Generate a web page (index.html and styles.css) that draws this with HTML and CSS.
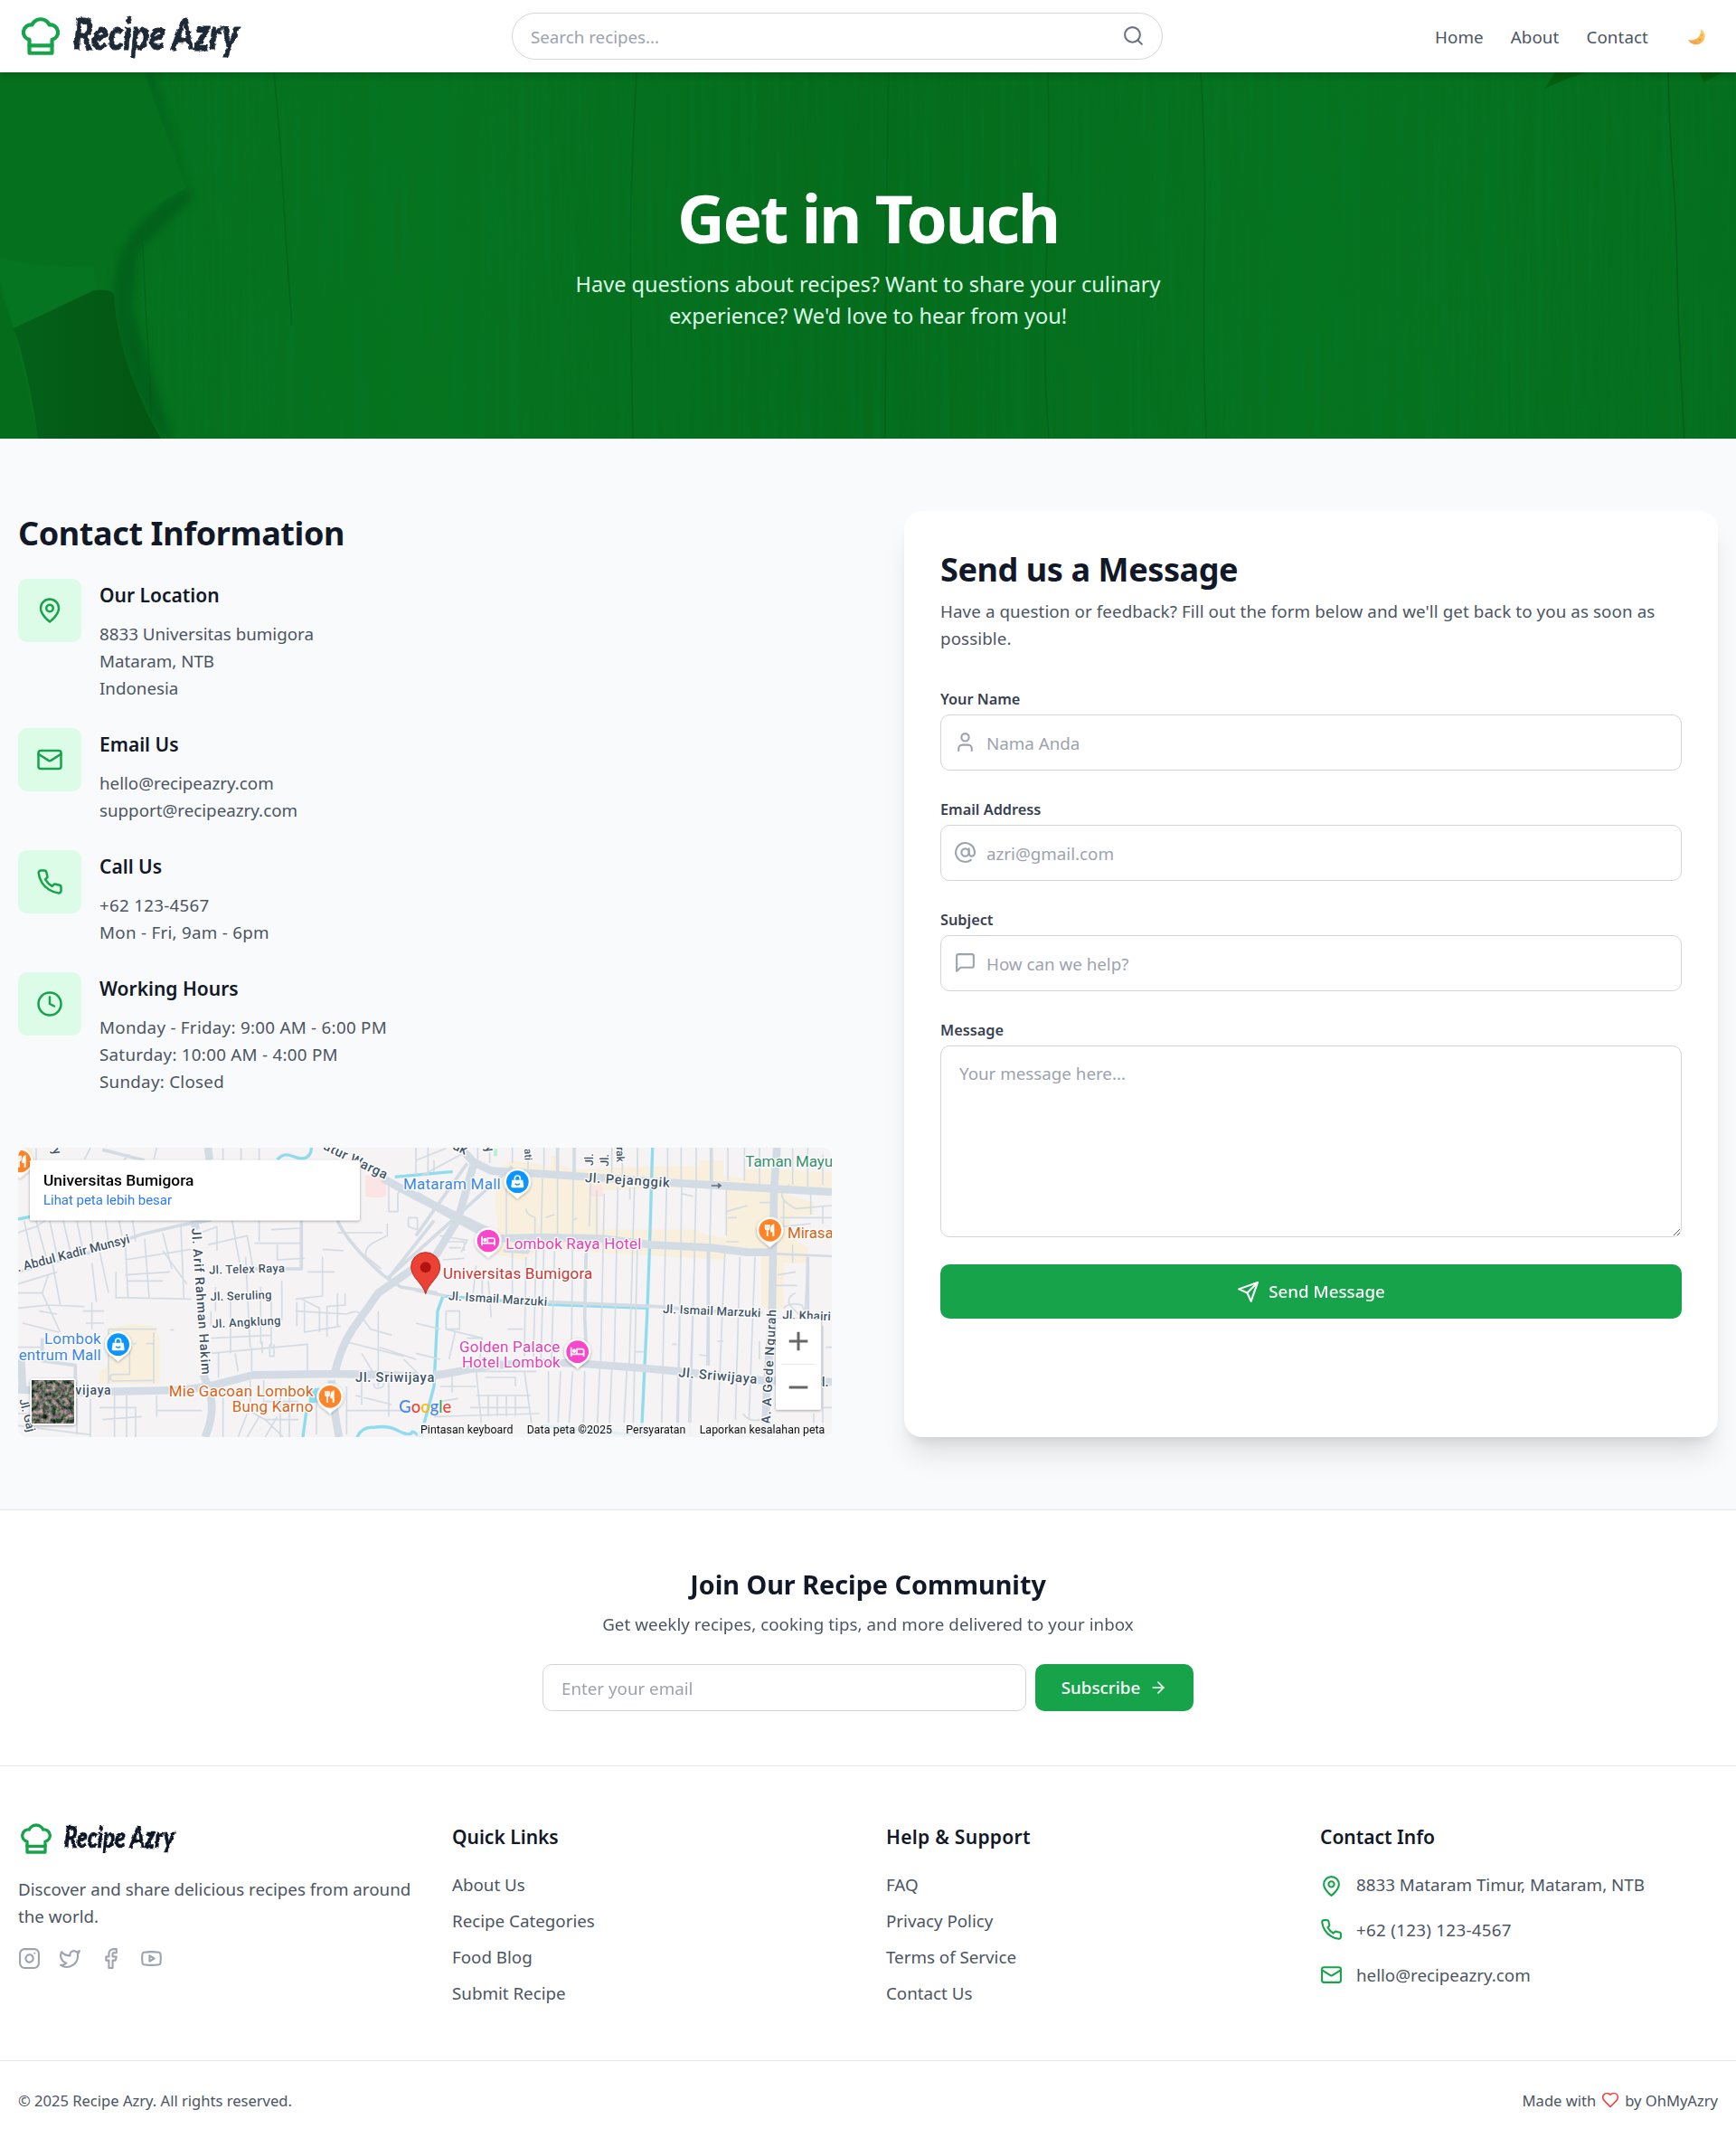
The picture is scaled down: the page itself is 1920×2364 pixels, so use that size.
FILE: index.html
```html
<!DOCTYPE html>
<html lang="en">
<head>
<meta charset="utf-8">
<title>Contact - Recipe Azry</title>
<link rel="stylesheet" href="styles.css">
</head>
<body>
<svg class="defs" aria-hidden="true">
  <filter id="brush" x="-5%" y="-20%" width="110%" height="150%"><feTurbulence type="fractalNoise" baseFrequency=".12 .18" numOctaves="2" seed="3"/><feDisplacementMap in="SourceGraphic" scale="5" xChannelSelector="R" yChannelSelector="G"/></filter>
  <symbol id="i-hat" viewBox="0 0 24 24"><path d="M6 13.87A4 4 0 0 1 7.41 6a5.11 5.11 0 0 1 1.05-1.54 5 5 0 0 1 7.08 0A5.11 5.11 0 0 1 16.59 6 4 4 0 0 1 18 13.87V21H6Z"/><path d="M6 17h12"/></symbol>
  <symbol id="i-search" viewBox="0 0 24 24"><circle cx="11" cy="11" r="8"/><path d="m21 21-4.3-4.3"/></symbol>
  <symbol id="i-pin" viewBox="0 0 24 24"><path d="M20 10c0 6-8 12-8 12s-8-6-8-12a8 8 0 0 1 16 0Z"/><circle cx="12" cy="10" r="3"/></symbol>
  <symbol id="i-mail" viewBox="0 0 24 24"><rect x="2" y="4" width="20" height="16" rx="2"/><path d="m22 7-8.97 5.7a1.94 1.94 0 0 1-2.06 0L2 7"/></symbol>
  <symbol id="i-phone" viewBox="0 0 24 24"><path d="M22 16.92v3a2 2 0 0 1-2.18 2 19.79 19.79 0 0 1-8.63-3.07 19.5 19.5 0 0 1-6-6 19.79 19.79 0 0 1-3.07-8.67A2 2 0 0 1 4.11 2h3a2 2 0 0 1 2 1.72 12.84 12.84 0 0 0 .7 2.81 2 2 0 0 1-.45 2.11L8.09 9.91a16 16 0 0 0 6 6l1.27-1.27a2 2 0 0 1 2.11-.45 12.84 12.84 0 0 0 2.81.7A2 2 0 0 1 22 16.92z"/></symbol>
  <symbol id="i-clock" viewBox="0 0 24 24"><circle cx="12" cy="12" r="10"/><path d="M12 6v6l4 2"/></symbol>
  <symbol id="i-user" viewBox="0 0 24 24"><path d="M19 21v-2a4 4 0 0 0-4-4H9a4 4 0 0 0-4 4v2"/><circle cx="12" cy="7" r="4"/></symbol>
  <symbol id="i-at" viewBox="0 0 24 24"><circle cx="12" cy="12" r="4"/><path d="M16 8v5a3 3 0 0 0 6 0v-1a10 10 0 1 0-4 8"/></symbol>
  <symbol id="i-msg" viewBox="0 0 24 24"><path d="M21 15a2 2 0 0 1-2 2H7l-4 4V5a2 2 0 0 1 2-2h14a2 2 0 0 1 2 2z"/></symbol>
  <symbol id="i-send" viewBox="0 0 24 24"><path d="m22 2-7 20-4-9-9-4Z"/><path d="M22 2 11 13"/></symbol>
  <symbol id="i-arrow" viewBox="0 0 24 24"><path d="M5 12h14"/><path d="m12 5 7 7-7 7"/></symbol>
  <symbol id="i-instagram" viewBox="0 0 24 24"><rect x="2" y="2" width="20" height="20" rx="5"/><path d="M16 11.37A4 4 0 1 1 12.63 8 4 4 0 0 1 16 11.37z"/><path d="M17.5 6.5h.01"/></symbol>
  <symbol id="i-twitter" viewBox="0 0 24 24"><path d="M22 4s-.7 2.1-2 3.4c1.6 10-9.4 17.3-18 11.6 2.2.1 4.4-.6 6-2C3 15.5.5 9.6 3 5c2.2 2.6 5.6 4.1 9 4-.9-4.2 4-6.6 7-3.8 1.1 0 3-1.2 3-1.2z"/></symbol>
  <symbol id="i-facebook" viewBox="0 0 24 24"><path d="M18 2h-3a5 5 0 0 0-5 5v3H7v4h3v8h4v-8h3l1-4h-4V7a1 1 0 0 1 1-1h3z"/></symbol>
  <symbol id="i-youtube" viewBox="0 0 24 24"><path d="M2.5 17a24.12 24.12 0 0 1 0-10 2 2 0 0 1 1.4-1.4 49.56 49.56 0 0 1 16.2 0A2 2 0 0 1 21.5 7a24.12 24.12 0 0 1 0 10 2 2 0 0 1-1.4 1.4 49.55 49.55 0 0 1-16.2 0A2 2 0 0 1 2.5 17"/><path d="m10 15 5-3-5-3z"/></symbol>
  <symbol id="i-heart" viewBox="0 0 24 24"><path d="M19 14c1.49-1.46 3-3.21 3-5.5A5.5 5.5 0 0 0 16.5 3c-1.76 0-3 .5-4.5 2-1.5-1.5-2.74-2-4.5-2A5.5 5.5 0 0 0 2 8.5c0 2.3 1.5 4.05 3 5.5l7 7Z"/></symbol>
</svg>

<header class="topbar">
  <a class="brand"><svg class="icon brand-hat"><use href="#i-hat"/></svg><svg class="brand-name" viewBox="0 0 185 60"><g filter="url(#brush)"><text x="1" y="45" textLength="102" lengthAdjust="spacingAndGlyphs">Recipe</text><text x="110" y="45" textLength="74" lengthAdjust="spacingAndGlyphs">Azry</text></g></svg></a>
  <div class="search"><input type="text" placeholder="Search recipes..."><svg class="icon"><use href="#i-search"/></svg></div>
  <nav class="nav">
    <a>Home</a><a>About</a><a>Contact</a>
    <button class="theme" aria-label="Theme"><svg viewBox="0 0 24 24"><defs><linearGradient id="moon" x1="1" y1="0" x2="0.2" y2="1"><stop offset="0" stop-color="#ffd56b"/><stop offset=".6" stop-color="#fbb84e"/><stop offset="1" stop-color="#f79a4c"/></linearGradient></defs><path fill="url(#moon)" d="M17 2.2C22 5.400 24 11.500 21 16.500 17.800 22 10.600 23.600 5.200 20.300 3.500 19.200 2.200 17.600 1.400 15.900c4.400 1.300 9.200.2 12.400-3.100C16.600 9.900 17.700 6 17 2.200Z"/><g fill="#e8964a"><circle cx="18.500" cy="10" r="1"/><circle cx="16" cy="16" r="1.300"/><circle cx="10" cy="19" r=".9"/></g></svg></button>
  </nav>
</header>

<section class="hero">
  <svg class="hero-bg" viewBox="0 0 1920 405" preserveAspectRatio="none">
    <defs>
      <filter id="grain" x="0" y="0" width="100%" height="100%"><feTurbulence type="fractalNoise" baseFrequency="0.16 0.004" numOctaves="4" seed="7"/><feColorMatrix values="0 0 0 0 0  0 0 0 0 .2  0 0 0 0 .03  1.6 0 0 0 -.62"/></filter>
      <filter id="soft"><feGaussianBlur stdDeviation="5"/></filter>
      <linearGradient id="tone"><stop offset="0" stop-color="#05701d"/><stop offset=".25" stop-color="#06731f"/><stop offset=".5" stop-color="#056c1c"/><stop offset=".75" stop-color="#06731f"/><stop offset="1" stop-color="#056f1e"/></linearGradient>
      <linearGradient id="handle" x1="0" x2="1"><stop offset="0" stop-color="#046119"/><stop offset="1" stop-color="#035512"/></linearGradient>
    </defs>
    <rect width="1920" height="405" fill="url(#tone)"/>
    <rect width="1920" height="405" filter="url(#grain)" opacity=".4"/>
    <g fill="none" stroke="#035014" stroke-width="1.500" opacity=".35"><path d="M158 190q2 60 6 120t2 95"/><path d="M303 0q6 60 10 130t10 150"/><path d="M704 0q-4 70-6 140t2 265M983 0q-3 120-4 405M1159 0q2 120-2 220t3 185"/><path d="M1328 0q6 90 4 200t2 205"/></g>
    <path d="M1845 0q1 60 5 110t5 110 8 190" fill="none" stroke="#035014" stroke-width="1.500" opacity=".6"/>
    <path d="M160 0 206 128q-50 30-66 60t-14 80q10 70 54 137H190L146 260l6-60 60-60L168 0Z" fill="#034f12" opacity=".5" filter="url(#soft)"/>
    <path d="M0 0H159Q185 70 206 128q-64 32-78 64-17 22-20 52l-5 40-60 121H0Z" fill="#05711e"/>
    <path d="M0 205q50 12 104 10l2 26-91 42L0 230Z" fill="#067521"/>
    <path d="M0 240 15 283 42 405H0Z" fill="#056c1c"/>
    <path d="M15 283 104 241Q122 239 126 245C128 290 144 345 178 405H42Q32 330 15 283Z" fill="url(#handle)"/>
    <path d="M1708 18q26-12 46-18h-34q-6 10-12 18ZM1880 0h26l-22 11Z" fill="#04600f"/>
  </svg>
  <div class="hero-text">
    <h1>Get in Touch</h1>
    <p>Have questions about recipes? Want to share your culinary<br>experience? We'd love to hear from you!</p>
  </div>
</section>

<main class="main">
  <section class="info">
    <h2>Contact Information</h2>
    <div class="items">
      <div class="item"><span class="tile"><svg class="icon"><use href="#i-pin"/></svg></span><div><h3>Our Location</h3><p>8833 Universitas bumigora<br>Mataram, NTB<br>Indonesia</p></div></div>
      <div class="item"><span class="tile"><svg class="icon"><use href="#i-mail"/></svg></span><div><h3>Email Us</h3><p>hello@recipeazry.com<br>support@recipeazry.com</p></div></div>
      <div class="item"><span class="tile"><svg class="icon"><use href="#i-phone"/></svg></span><div><h3>Call Us</h3><p class="figures">+62 123-4567<br>Mon - Fri, 9am - 6pm</p></div></div>
      <div class="item"><span class="tile"><svg class="icon"><use href="#i-clock"/></svg></span><div><h3>Working Hours</h3><p class="figures">Monday - Friday: 9:00 AM - 6:00 PM<br>Saturday: 10:00 AM - 4:00 PM<br>Sunday: Closed</p></div></div>
    </div>
    <svg class="map" viewBox="60 58 2700 960">
      <defs>
        <filter id="sh" x="-20%" y="-20%" width="140%" height="150%"><feDropShadow dx="0" dy="3" stdDeviation="4" flood-opacity=".35"/></filter>
        <filter id="sat" x="0" y="0" width="100%" height="100%" color-interpolation-filters="sRGB"><feTurbulence type="fractalNoise" baseFrequency=".07" numOctaves="5" seed="4"/><feColorMatrix values="1.3 0 0 0 -.24  .8 .3 0 0 -.13  .9 0 .2 0 -.17  0 0 0 0 1"/></filter>
        <g id="bag"><path d="M-18-4h36l3 22q0 4-4 4h-34q-4 0-4-4Z" fill="#fff"/><path d="M-9-4v-5a9 9 0 0 1 18 0v5" fill="none" stroke="#fff" stroke-width="5"/><path d="M-8 8q8 8 16 0" fill="none" stroke="#0b96ff" stroke-width="4"/></g>
        <g id="fork" fill="none" stroke="#fff"><path d="M-15-19v12q0 5 6 5t6-5v-12M-9-19V20" stroke-width="5"/><path d="M11 20V-17q-8 3-7 20h7" stroke-width="6" fill="#fff"/></g>
        <g id="bed" fill="none" stroke="#fff" stroke-width="5"><path d="M-21-15V16M21 16V-3q0-6-6-6H-2V6M-21 8H21"/><circle cx="-11" cy="-3" r="4" fill="#fff"/></g>
      </defs>
      <rect x="60" y="58" width="2700" height="960" fill="#f5f3f4"/>
      <g class="zone">
        <path d="M358 654 430 643 515 650 530 690V840H330V800L358 780ZM60 58h48v60H60Z"/>
        <path d="M1645 130 1700 100 1830 120V85h20V110L1900 130 2170 120 2320 120V100H2400V150L2470 160V130H2560L2760 140V200L2600 210 2700 240V280L2620 290V350L2680 390V440H2600V590H2525V400H2410V430L1800 395 1740 430 1650 415V280H1645ZM2320 190V340L2410 360V190ZM1990 200V330H2320V190Z" fill-rule="evenodd"/>
      </g>
      <path d="M1212 150h70v68q-20 10-70 2ZM1955 185h45v35h-45Z" fill="#fce4e4"/>
      <path d="M1638 62h12v24h-12Z" fill="#b8efcf"/>
      <g class="water">
        <path d="M60 295 110 285M920 98q20-25 50-12 45 20 60-10l4-18M1310 155l130-12q50-5 62-5"/>
        <path d="M1185 1018q15-35 55-32 45-8 80 10 45 24 50 0M1005 1018 1018 920M1372 1000 1395 1018 1440 850 1452 600 1470 550 1820 578 2150 590M2165 58 2155 400 2148 590 2128 1018M1800 980l200 20 100 10" />
        <path d="M1030 860h34v40h-34Z" fill="#8fdcee"/>
      </g>
      <g class="minor">
        <path d="M120 60v40M60 340l60-20 30-20M80 300l30 140M120 300l35 130M165 300l25 120M210 300l25 110M255 300l20 100M300 300l10 90M350 300l10 70M395 300l10 50M60 510l130-40M160 480l-20 60H60M140 540l60 130M60 590l100-10 120 5M170 420l30 160M305 440l15 130M330 400l30 140M385 470v90M415 360l10 200M480 360l15 200M440 300l10 70M540 340l30 120M600 310l10 250M415 430l220-35M415 480l150-10M385 555l250 5M420 500h120M540 400l80 110M640 350l80-30M720 320v80M690 380l130-30 20 110M770 300l25 140M860 300v70M845 375h160M920 380v50l90-5M1000 300v60M900 330l100-5M1070 420v130l-90 10M1020 470h90M1070 395 1140 400M815 420l15 300M700 600v50M715 520v80M765 560v180M865 520v190M900 560v160M935 500v130M700 690l200-10M985 570v80M1010 570v100l120-20M1120 540v110M1145 540v40l-60 5v100M1000 560l60 30v80M980 600l170 10M1150 610q40-20 50 10l30 40 70 20"/>
        <path d="M275 600h70M285 640h60M305 570v90M130 600l60 10M75 640l120 30M60 720h80M360 660v180M360 660h160M510 670v170M430 690v120H380q-15 0-15 10t12 12l130-2M440 708h12M485 708h25M565 662h12M725 740v80M780 740l10 60M835 720v80M700 740l320-30V800M870 700v40M895 710v40h14v-40M1140 700l200 50M1260 720l120 40M1200 740l60 100M1340 760l60 60"/>
        <path d="M60 940h190M60 980l240 30M255 890v120M300 890v128M330 920h120v98M380 870v148M420 880v138M520 880v70M340 960l130-10M520 930h150M740 830v188M770 900l110 60 60 58M830 830v90M875 830v80M820 940l-30 78M860 950l-40 68M920 950l-40 68M930 860v158M960 860v158M880 900h110M880 960h110M1050 900v110M1150 850v160M1200 830v80M1255 600v250M1290 830v120M1180 880l120 30M1150 930h200M1240 840q0 20 17 15 17 0 15-15"/>
        <path d="M300 58l-20 40M680 58l20 50M430 80l-20 20M520 58l-10 40M740 60v40M800 60v40M860 60v40M1290 180v90h30v-60l20-30M1355 290h30v40l-30-10ZM1215 420q-10-30 30-50l40-20V310M1120 340h150M1215 420l50 40M1380 58v90M1420 58v90"/>
        <g transform="translate(1380 0)">
          <path d="M0 100 100 60M20 150 170 70M60 100v40M205 58v40M245 60v50M320 58v50M372 58v70M425 58v80M600 200v160M650 58v90M685 58v100M735 58v110M835 58v110M880 58v110M930 58v110M1035 58v110M1090 58v110M1140 58v120M1250 60v120M1300 58v130M1350 80v100"/>
          <path d="M300 190v160M365 260q0 20 30 30v60M420 160l-5 200M470 160v190M522 160l-6 600M580 160l-5 160M625 210l-12 560M670 190l-12 580M725 190l-17 590M832 170l-20 970M882 170l-12 850M930 170l-20 850M980 180l-15 600M1030 190v160M400 350l-10 400M460 400l-10 360M425 380l-10 380M365 420l-5 330M320 400v150M1075 420l-15 540M1125 420l-20 540M1025 410l-25 600M925 410l-20 560M880 400l-15 610M735 380l-15 640M520 800l-15 218M560 800l-5 218M610 790l-10 228M650 790l-10 228M700 790l-12 228M440 800v200M480 800l-10 200"/>
          <path d="M80 350l90 15-20 40M100 370h60v30M110 390h40M90 430l70-5M200 450l-10 90M220 480v80M240 500l10 120M100 600h45v60H100ZM100 660l120 30-10 90M130 670l-20 90M0 640l80 20M0 740l80 20M60 800h340M80 850h120M80 900l60-10M120 810v60M200 800l20 200M230 820h100v30M200 880h180M180 920h200M60 950l350-10M240 880v70M270 880v70M300 880v70M330 880v70M360 800l30 218M305 660h50M170 690h50M850 710h15M725 735h30M940 745l35 5M430 290l30-10M520 300l15-10M710 190v40M1030 270l70-20M1035 290h30M1140 240h40M880 210l40 10M1030 370h40"/>
          <path d="M1220 230v90l90-10M1310 200v80M1350 250v60M1240 180q-60 40 20 80l120-10M1210 290h170M1300 420l-10 200M1250 380v60M1200 480l60-10M1190 515h75M1260 540q-30 10-20 40l40 40M1220 590q20-20 60-10l20 40M1085 940q20 30 60 20M1000 700h20M1140 700v60M1350 920h30M1360 720h20M1350 650v370M1320 940v78"/>
        </g>
      </g>
      <g class="mid"><path d="M1000 300v160H820M650 300v30M60 470 300 405 470 345 600 315 700 298M1120 300q30 70 150 180l60 40 120 20M1290 490 1440 300M250 870v-90l-110-15V690M340 65 480 100M70 760v60M1282 495 1700 120"/>
      <g transform="translate(1380 0)"><path d="M565 385 560 620 565 720M970 380v400M440 570 800 585 960 600 1150 605M980 58v120M1300 420v180M525 58v90M470 58v90M0 350 170 110M290 400l80 5 20-30M0 530l100 20"/></g></g>
      <g class="major"><path d="M60 860 250 870 600 862 690 850 840 812 1110 808 1200 810 1380 815M1110 808Q1130 720 1170 660L1255 540 1370 460 1440 425 1520 295 1572 110M650 330 645 300M1100 830Q1105 920 1125 1018M690 58l5 40M675 810 690 850Q720 930 680 1018M70 760 75 860M1270 160 1390 225 1650 350" />
        <g transform="translate(1380 0)"><path d="M60 815 250 780 440 770 560 775 760 790 870 800 1150 830 1380 835M150 60 190 105 250 135 420 145 650 160 860 175 1200 195 1380 205M0 215 130 290 260 360 420 355 620 360 780 380 980 390 1100 405 1195 405M1198 58 1188 200 1182 600 1165 840 1158 1018"/><path class="thin" d="M1195 410 1380 418"/></g></g>

      <g class="road-label">
        <text transform="translate(1070 62) rotate(26)" font-size="44" textLength="230">atur Warga</text>
        <text transform="translate(60 470) rotate(-14.500)" font-size="42" textLength="385">. Abdul Kadir Munsyi</text>
        <text transform="translate(636 326) rotate(86)" font-size="43" textLength="486">Jl. Arif Rahman Hakim</text>
        <text transform="translate(694 477) rotate(-1.500)" font-size="39" textLength="251">Jl. Telex Raya</text>
        <text transform="translate(698 566) rotate(-2)" font-size="39" textLength="204">Jl. Seruling</text>
        <text transform="translate(704 656) rotate(-3)" font-size="39" textLength="228">Jl. Angklung</text>
        <text x="250" y="878" font-size="42" textLength="118">vijaya</text>
        <text transform="translate(64 894) rotate(76)" font-size="40">Jl. Gaj</text>
        <text x="1179" y="836" font-size="44" textLength="262">Jl. Sriwijaya</text>
        <text transform="translate(172 66) rotate(65)" font-size="40">y</text>
        <g transform="translate(1380 0)">
          <text transform="translate(120 62) rotate(25)" font-size="44">ak</text>
          <text transform="translate(228 58) rotate(65)" font-size="40">y</text>
          <text transform="translate(360 62) rotate(88)" font-size="34">ati</text>
          <text transform="translate(588 118) rotate(-90)" font-size="38">Jl. </text>
          <text transform="translate(640 120) rotate(-90)" font-size="38">Jl. </text>
          <text transform="translate(665 56) rotate(88)" font-size="36">rak</text>
          <text transform="translate(560 172) rotate(3.500)" font-size="44" textLength="282">Jl. Pejanggik</text>
          <text transform="translate(107 563) rotate(3.500)" font-size="40" textLength="328">Jl. Ismail Marzuki</text>
          <text transform="translate(819 606) rotate(2.500)" font-size="40" textLength="325">Jl. Ismail Marzuki</text>
          <text transform="translate(1216 626) rotate(2)" font-size="40" textLength="160">Jl. Khairi</text>
          <text transform="translate(870 818) rotate(5)" font-size="44" textLength="262">Jl. Sriwijaya</text>
          <text transform="translate(1175 975) rotate(-87)" font-size="42" textLength="380">A. A Gede Ngurah</text>
          <text x="1346" y="850" font-size="44">l.</text>
          <path d="M980 184h30m-8-7 9 7-9 7" fill="none" stroke="#5c7080" stroke-width="5"/>
        </g>
      </g>
      <g class="place-label">
        <g fill="#3b86e8"><text x="147" y="710" textLength="188">Lombok</text><text x="62" y="763" textLength="273">entrum Mall</text><text x="1338" y="196" textLength="323">Mataram Mall</text></g>
        <g fill="#d56416"><text x="560" y="882" textLength="480">Mie Gacoan Lombok</text><text x="770" y="935" textLength="269">Bung Karno</text><text x="2613" y="357" textLength="152">Mirasa</text></g>
        <g fill="#e240b4"><text x="1678" y="393" textLength="450">Lombok Raya Hotel</text><text x="1524" y="735" textLength="334">Golden Palace</text><text x="1533" y="787" textLength="326">Hotel Lombok</text></g>
        <text x="2473" y="122" fill="#36906c" textLength="290">Taman Mayu</text>
        <text x="1470" y="492" fill="#c8352f" textLength="496">Universitas Bumigora</text>
      </g>
      <g filter="url(#sh)">
        <g fill="#fff"><path id="drop" d="M392 768C380 752 348 742 348 711A44 44 0 0 1 436 711C436 742 404 752 392 768Z"/><use href="#drop" x="1325" y="-540"/><use href="#drop" x="703" y="173"/><use href="#drop" x="2163" y="-379"/><use href="#drop" x="-326" y="-608"/><use href="#drop" x="1228" y="-344"/><use href="#drop" x="1524" y="24"/></g>
      </g>
      <g fill="#0b96ff"><circle cx="392" cy="711" r="37"/><circle cx="1717" cy="171" r="37"/></g>
      <g fill="#ff8427"><circle cx="1095" cy="884" r="37"/><circle cx="2555" cy="332" r="37"/><circle cx="66" cy="103" r="37"/></g>
      <g fill="#f847cb"><circle cx="1620" cy="367" r="37"/><circle cx="1916" cy="735" r="37"/></g>
      <use href="#bag" x="392" y="709"/><use href="#bag" x="1717" y="169"/>
      <use href="#fork" x="1095" y="884"/><use href="#fork" x="2555" y="332"/><use href="#fork" x="72" y="103"/>
      <use href="#bed" x="1620" y="367"/><use href="#bed" x="1916" y="735"/>
      <path d="M1412 543C1402 505 1364 490 1364 453A48 48 0 0 1 1460 453C1460 490 1422 505 1412 543Z" fill="#ea4335" stroke="#c5221f" stroke-width="3"/><circle cx="1412" cy="455" r="18" fill="#b31412"/>
      <text class="google" x="1324" y="938" textLength="174" lengthAdjust="spacingAndGlyphs"><tspan fill="#4285f4">G</tspan><tspan fill="#ea4335">o</tspan><tspan fill="#fbbc04">o</tspan><tspan fill="#4285f4">g</tspan><tspan fill="#34a853">l</tspan><tspan fill="#ea4335">e</tspan></text>
      <rect x="1385" y="970" width="1375" height="48" fill="#f5f5f5" opacity=".8"/>
      <g class="credits"><text x="1395" y="1005" textLength="307">Pintasan keyboard</text><text x="1748" y="1005" textLength="283">Data peta ©2025</text><text x="2077" y="1005" textLength="198">Persyaratan</text><text x="2321" y="1005" textLength="416">Laporkan kesalahan peta</text></g>
      <g filter="url(#sh)"><rect x="99" y="99" width="1095" height="200" rx="5" fill="#fff"/><rect x="100" y="823" width="152" height="155" rx="10" fill="#fff"/><rect x="2574" y="626" width="150" height="301" rx="5" fill="#fff"/></g>
      <rect x="106" y="829" width="140" height="143" rx="5" filter="url(#sat)"/>
      <text class="card-title" x="144" y="185" textLength="499">Universitas Bumigora</text>
      <text class="card-link" x="144" y="248" textLength="426">Lihat peta lebih besar</text>
      <path d="M2618 700h62M2649 669v62M2618 853h62" stroke="#666" stroke-width="9"/><path d="M2592 776h111" stroke="#e6e6e6" stroke-width="3"/>
    </svg>
  </section>

  <section class="card">
    <h2>Send us a Message</h2>
    <p class="lead">Have a question or feedback? Fill out the form below and we'll get back to you as soon as<br>possible.</p>
    <form class="form">
      <div class="field"><label>Your Name</label><div class="box"><svg class="icon"><use href="#i-user"/></svg><input type="text" placeholder="Nama Anda"></div></div>
      <div class="field"><label>Email Address</label><div class="box"><svg class="icon"><use href="#i-at"/></svg><input type="text" placeholder="azri@gmail.com"></div></div>
      <div class="field"><label>Subject</label><div class="box"><svg class="icon"><use href="#i-msg"/></svg><input type="text" placeholder="How can we help?"></div></div>
      <div class="field"><label>Message</label><textarea placeholder="Your message here..."></textarea></div>
      <button type="button" class="btn send"><svg class="icon"><use href="#i-send"/></svg><span>Send Message</span></button>
    </form>
  </section>
</main>

<footer>
  <section class="news">
    <h2>Join Our Recipe Community</h2>
    <p>Get weekly recipes, cooking tips, and more delivered to your inbox</p>
    <form class="subscribe"><input type="text" placeholder="Enter your email"><button type="button" class="btn"><span>Subscribe</span><svg class="icon"><use href="#i-arrow"/></svg></button></form>
  </section>
  <section class="cols">
    <div>
      <a class="brand small"><svg class="icon brand-hat"><use href="#i-hat"/></svg><svg class="brand-name" viewBox="0 0 185 60"><g filter="url(#brush)"><text x="1" y="45" textLength="102" lengthAdjust="spacingAndGlyphs">Recipe</text><text x="110" y="45" textLength="74" lengthAdjust="spacingAndGlyphs">Azry</text></g></svg></a>
      <p class="about">Discover and share delicious recipes from around<br>the world.</p>
      <div class="social"><svg class="icon"><use href="#i-instagram"/></svg><svg class="icon"><use href="#i-twitter"/></svg><svg class="icon"><use href="#i-facebook"/></svg><svg class="icon"><use href="#i-youtube"/></svg></div>
    </div>
    <div><h3>Quick Links</h3><ul class="links"><li>About Us</li><li>Recipe Categories</li><li>Food Blog</li><li>Submit Recipe</li></ul></div>
    <div><h3 class="wide">Help &amp; Support</h3><ul class="links"><li>FAQ</li><li>Privacy Policy</li><li>Terms of Service</li><li>Contact Us</li></ul></div>
    <div><h3>Contact Info</h3><ul class="reach"><li class="first"><svg class="icon"><use href="#i-pin"/></svg><span>8833 Mataram Timur, Mataram, NTB</span></li><li><svg class="icon"><use href="#i-phone"/></svg><span class="phone">+62 (123) 123-4567</span></li><li><svg class="icon"><use href="#i-mail"/></svg><span>hello@recipeazry.com</span></li></ul></div>
  </section>
  <section class="legal"><p>© 2025 Recipe Azry. All rights reserved.</p><p class="made"><span>Made with</span><svg class="icon"><use href="#i-heart"/></svg><span>by OhMyAzry</span></p></section>
</footer>
</body>
</html>
```
FILE: styles.css
```css
*{box-sizing:border-box;margin:0;padding:0}
html{font-size:20px}
body{font-family:"Noto Sans","Open Sans",sans-serif;font-size:.938rem;line-height:1.5rem;color:#4b5563;background:#fff}
ul{list-style:none}
input,textarea,button{font:inherit;letter-spacing:inherit;color:inherit;border:0;outline:0}
::placeholder{color:#9ca3af;opacity:1}
.defs{position:absolute;width:0;height:0}
.icon{display:block;flex:none;width:1.25rem;height:1.25rem;fill:none;stroke:currentColor;stroke-width:2;stroke-linecap:round;stroke-linejoin:round}
h1,h2,h3{color:#111827;font-weight:700}

h3,label,.item p,.lead,.news p,.about,.links li,.reach span,.legal span,.legal>p:first-child,.nav a{transform:translateY(1px)}
.main h2,.news h2,.hero p{transform:translateY(1.5px)}

.topbar{position:relative;z-index:1;height:4rem;padding:0 1rem;display:flex;align-items:center;justify-content:space-between;background:#fff;box-shadow:0 5px 8px -1px rgba(0,0,0,.1),0 3px 5px -2px rgba(0,0,0,.1)}
.brand{display:flex;align-items:center;gap:.5rem;color:#1f2937}
.brand-hat{width:2.5rem;height:2.5rem;color:#16a34a}
.brand-name{width:185px;height:60px;overflow:visible}
.brand-name text{font:italic 900 47px Lato,sans-serif;fill:currentColor;stroke:currentColor;stroke-width:.8}
.small{gap:.5rem;height:2rem;color:#111827}
.small .brand-hat{width:2rem;height:2rem}
.small .brand-name{width:124px;height:40px}
.search{position:relative;width:36rem;height:52px}
.search input{width:100%;height:100%;padding:0 1rem;border:1px solid #d1d5db;border-radius:26px}
.search .icon{position:absolute;right:1rem;top:13px;color:#6b7280}
.nav{display:flex;align-items:center;gap:1.5rem;letter-spacing:.1px}
.theme{display:flex;width:47px;padding:0 13px;background:none}
.theme svg{width:21px;height:21px}

.hero{position:relative;height:405px;display:flex;justify-content:center;align-items:center;text-align:center}
.hero-bg{position:absolute;inset:0;width:100%;height:100%}
.hero-text{position:relative}
h1{font-size:3.65rem;line-height:75px;letter-spacing:-2.400px;color:#fff;margin-bottom:1rem;transform:translateY(3px)}
.hero p{font-size:1.177rem;line-height:1.75rem;color:#dcfce7}

.main{display:grid;grid-template-columns:1fr 1fr;gap:4rem;padding:4rem 1rem;background:#f9fafb}
.main h2{font-size:1.800rem;line-height:2.25rem;letter-spacing:-.4px}
h3{font-size:1.050rem;line-height:1.75rem;font-weight:600}
.wide{letter-spacing:.3px}
.items{display:flex;flex-direction:column;gap:1.5rem;margin-top:1.5rem}
.item{display:flex;gap:1rem;align-items:flex-start}
.item h3{margin-bottom:.5rem}
.figures{letter-spacing:.28px}
.phone{letter-spacing:.3px}
.tile{padding:1rem;border-radius:.5rem;background:#dcfce7;color:#16a34a}
.tile .icon{width:1.5rem;height:1.5rem}
.map{display:block;width:100%;height:320px;margin-top:59px;border-radius:.5rem}
.zone{fill:#f8f0dc}
.map .water{fill:none;stroke:#8fdcee;stroke-width:10}
.minor,.mid,.major{fill:none;stroke:#d3dce4;stroke-width:5;stroke-linejoin:round}
.mid{stroke-width:11}
.major{stroke-width:26}
.thin{stroke-width:8}
.map text{font-family:Roboto,sans-serif}
.road-label text,.place-label text{paint-order:stroke;stroke:#fff;stroke-width:8;stroke-linejoin:round}
.road-label text{fill:#3f5468;font-weight:500}
.place-label text{font-size:51px}
.map .google{font:500 60px Lato,sans-serif}
.credits text{font-size:37px;fill:#111}
.card-title{font-size:52px;font-weight:500}
.card-link{font-size:45px;fill:#2f7cf0}

.card{padding:2rem;border-radius:1rem;background:#fff;box-shadow:0 25px 31px -6px rgba(0,0,0,.1),0 10px 13px -7px rgba(0,0,0,.1)}
.lead{margin:.5rem 0 2rem;letter-spacing:.1px;white-space:nowrap}
.form{display:flex;flex-direction:column;gap:1.5rem}
.field{display:flex;flex-direction:column;gap:.25rem}
label{font-size:.815rem;line-height:1.25rem;font-weight:600;color:#374151}
.box{position:relative;height:62px}
.box input{width:100%;height:100%;padding:0 1rem 0 2.5rem}
.box input,textarea,.subscribe input{border:1px solid #d1d5db;border-radius:.5rem;background:#fff}
.box .icon{position:absolute;left:15px;top:18px;color:#9ca3af}
textarea{display:block;width:100%;height:212px;padding:.75rem 1rem;resize:vertical}
.btn{display:flex;align-items:center;justify-content:center;gap:.5rem;border-radius:.5rem;background:#16a34a;color:#fff;font-weight:500}
.send{height:3rem}

.news{padding:3rem 1rem;border-top:1px solid #e5e7eb;text-align:center}
.news h2{font-size:1.438rem;line-height:2rem;margin-bottom:.5rem}
.news p{letter-spacing:.06px}
.subscribe{display:flex;gap:.5rem;width:36rem;margin:1.5rem auto 0}
.subscribe input{flex:1;height:52px;padding:0 1rem}
.subscribe .btn{width:175px}
.subscribe .icon{width:1rem;height:1rem}
.cols{display:grid;grid-template-columns:repeat(4,1fr);gap:2rem;padding:3rem 1rem;border-top:1px solid #e5e7eb}
.cols h3{margin-bottom:1rem}
.about{margin:1rem 0;white-space:nowrap}
.social{display:flex;gap:1rem;color:#9ca3af}
.links{display:flex;flex-direction:column;gap:.5rem}
.reach{display:flex;flex-direction:column;gap:1rem}
.reach li{display:flex;align-items:center;gap:.75rem}
.reach .first .icon{margin-top:5px}
.reach .icon{color:#16a34a}
.legal{display:flex;justify-content:space-between;padding:1.5rem 1rem;border-top:1px solid #e5e7eb;font-size:.828rem;line-height:1.25rem}
.made{display:flex;align-items:center;gap:6px}
.made .icon{width:1rem;height:1rem;color:#ef4444}
```
